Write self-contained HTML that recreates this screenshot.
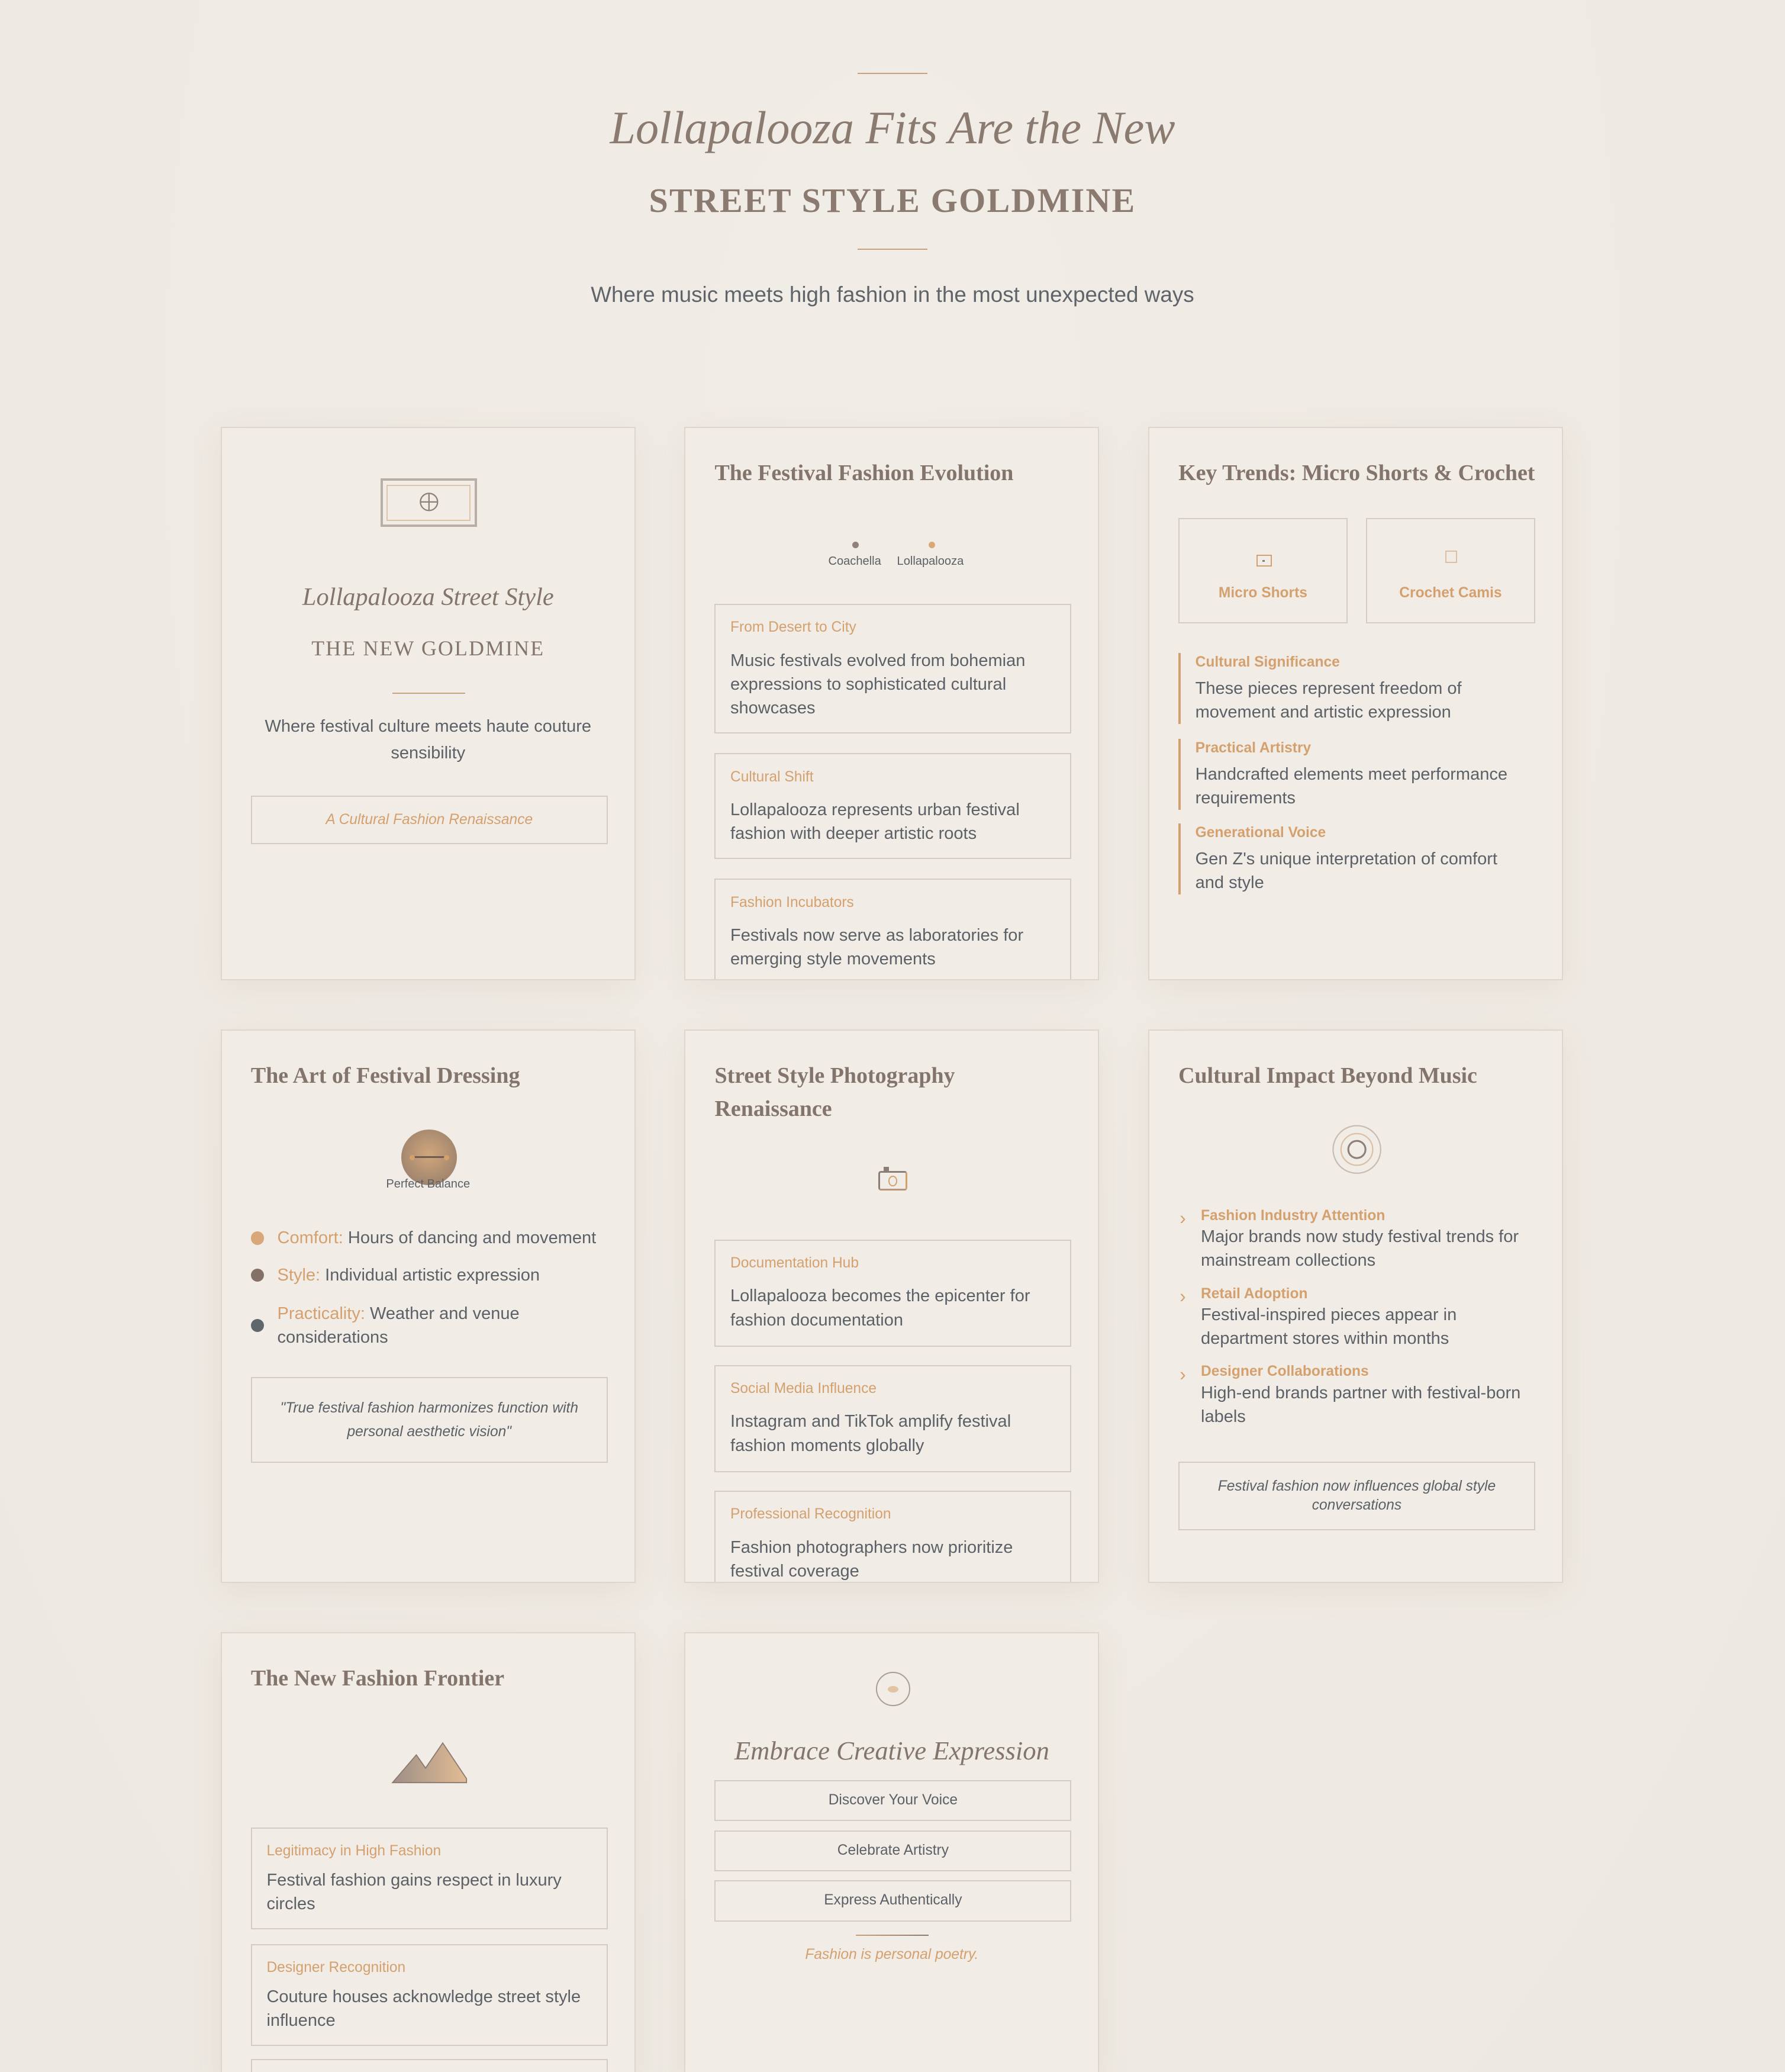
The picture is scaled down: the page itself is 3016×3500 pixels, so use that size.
<!DOCTYPE html>
<html><head><meta charset="utf-8">
<style>
*{margin:0;padding:0;box-sizing:border-box}
html,body{width:3016px;height:3500px;overflow:hidden;background:#efeae3}
#w{zoom:2.2324;width:1351px;height:1568px;position:relative;background:radial-gradient(ellipse at 50% 20%,#f1ece6,#ede8e1);font-family:"Liberation Sans",sans-serif;color:#5b6167}
.a{position:absolute}
.serif{font-family:"Liberation Serif",serif}
.c{position:absolute;width:314px;height:419px;background:#f1ece5;border:1px solid #ddd6cd;box-shadow:0 6px 24px rgba(120,100,80,.08);overflow:hidden}
.h{position:absolute;left:22px;top:22px;right:18px;font-family:"Liberation Serif",serif;font-weight:bold;font-size:17px;line-height:25px;color:#83756b}
.box{position:absolute;left:22px;width:270px;border:1px solid #d3ccc4}
.lb{font-size:11px;color:#d4a06e;line-height:14px}
.tx{font-size:13px;line-height:18px;color:#5b6167}
.ctr{text-align:center;left:0;right:0}
</style></head><body><div id="w">
<div class="a" style="left:649px;top:55px;width:53px;height:1px;background:#c9a27c"></div>
<div class="a ctr serif" style="top:74px;font-size:35px;line-height:46px;font-style:italic;color:#8a7a70">Lollapalooza Fits Are the New</div>
<div class="a ctr serif" style="top:134px;font-size:26px;line-height:36px;font-weight:bold;letter-spacing:1px;color:#8a7a70">STREET STYLE GOLDMINE</div>
<div class="a" style="left:649px;top:188px;width:53px;height:1px;background:#c9a27c"></div>
<div class="a ctr" style="top:212px;font-size:16.5px;line-height:22px;color:#5e646a">Where music meets high fashion in the most unexpected ways</div>

<!-- card 1 -->
<div class="c" style="left:167px;top:323px">
 <div class="a" style="left:120px;top:38px;width:73px;height:37px;border:2px solid #b9aea5"><div class="a" style="left:3px;top:3px;right:3px;bottom:3px;border:1px solid #dcc4a8"></div>
 <svg class="a" style="left:27px;top:8px" width="16" height="16" viewBox="0 0 16 16"><circle cx="8" cy="8" r="6.5" fill="none" stroke="#8c8079" stroke-width="1"/><path d="M8 1.5V14.5M1.5 8H14.5" stroke="#8c8079" stroke-width="1"/></svg></div>
 <div class="a ctr serif" style="top:115px;font-size:19px;line-height:26px;font-style:italic;color:#83756b">Lollapalooza Street Style</div>
 <div class="a ctr serif" style="top:156px;font-size:16px;line-height:22px;letter-spacing:1px;color:#83756b">THE NEW GOLDMINE</div>
 <div class="a" style="left:129px;top:200px;width:55px;height:1px;background:#c9a27c"></div>
 <div class="a ctr tx" style="top:216px;left:20px;right:20px;line-height:20px">Where festival culture meets haute couture sensibility</div>
 <div class="box" style="top:278px;height:37px;text-align:center;font-size:11px;line-height:35px;font-style:italic;color:#d4a06e">A Cultural Fashion Renaissance</div>
</div>

<!-- card 2 -->
<div class="c" style="left:518px;top:323px">
 <div class="h">The Festival Fashion Evolution</div>
 <div class="a" style="left:126px;top:86px;width:5px;height:5px;border-radius:50%;background:#8e827b"></div>
 <div class="a" style="left:184px;top:86px;width:5px;height:5px;border-radius:50%;background:#d8a878"></div>
 <div class="a" style="left:108px;top:95px;font-size:9px;line-height:12px;color:#5b6167">Coachella</div>
 <div class="a" style="left:160px;top:95px;font-size:9px;line-height:12px;color:#5b6167">Lollapalooza</div>
 <div class="box" style="top:133px;height:98px;padding:10px 11px"><div class="lb">From Desert to City</div><div class="tx" style="margin-top:9px">Music festivals evolved from bohemian expressions to sophisticated cultural showcases</div></div>
 <div class="box" style="top:246px;height:80px;padding:10px 11px"><div class="lb">Cultural Shift</div><div class="tx" style="margin-top:9px">Lollapalooza represents urban festival fashion with deeper artistic roots</div></div>
 <div class="box" style="top:341px;height:90px;padding:10px 11px"><div class="lb">Fashion Incubators</div><div class="tx" style="margin-top:9px">Festivals now serve as laboratories for emerging style movements</div></div>
</div>

<!-- card 3 -->
<div class="c" style="left:869px;top:323px">
 <div class="h">Key Trends: Micro Shorts &amp; Crochet</div>
 <div class="box" style="top:68px;width:128px;height:80px;text-align:center">
  <div class="a" style="left:58px;top:27px;width:12px;height:9px;border:1px solid #d4a06e"><div class="a" style="left:4px;top:3px;width:1.5px;height:1.5px;background:#8a7a70"></div></div>
  <div class="a ctr" style="top:50px;font-size:11px;font-weight:bold;color:#d4a06e">Micro Shorts</div></div>
 <div class="box" style="left:164px;top:68px;width:128px;height:80px;text-align:center">
  <div class="a" style="left:59px;top:24px;width:9px;height:9px;border:1px solid #dcc0a4"></div>
  <div class="a ctr" style="top:50px;font-size:11px;font-weight:bold;color:#d4a06e">Crochet Camis</div></div>
 <div class="a" style="left:22px;top:170px;width:260px;border-left:2px solid #d4a06e;padding-left:11px;height:54px"><div class="lb" style="font-weight:bold">Cultural Significance</div><div class="tx" style="margin-top:4px">These pieces represent freedom of movement and artistic expression</div></div>
 <div class="a" style="left:22px;top:235px;width:260px;border-left:2px solid #d4a06e;padding-left:11px;height:54px"><div class="lb" style="font-weight:bold">Practical Artistry</div><div class="tx" style="margin-top:4px">Handcrafted elements meet performance requirements</div></div>
 <div class="a" style="left:22px;top:299px;width:260px;border-left:2px solid #d4a06e;padding-left:11px;height:54px"><div class="lb" style="font-weight:bold">Generational Voice</div><div class="tx" style="margin-top:4px">Gen Z's unique interpretation of comfort and style</div></div>
</div>

<!-- card 4 -->
<div class="c" style="left:167px;top:779px">
 <div class="h">The Art of Festival Dressing</div>
 <div class="a" style="left:136px;top:75px;width:42px;height:42px;border-radius:50%;background:radial-gradient(circle at 50% 45%,#d1a77c,#8e7868)"><div class="a" style="left:8px;top:20px;width:26px;height:1.5px;background:#6e5a4e"></div><div class="a" style="left:6px;top:19px;width:4px;height:4px;border-radius:50%;background:#d4a06e"></div><div class="a" style="left:32px;top:19px;width:4px;height:4px;border-radius:50%;background:#d4a06e"></div></div>
 <div class="a ctr" style="top:110px;font-size:9px;line-height:12px;color:#5b6167">Perfect Balance</div>
 <div class="a" style="left:22px;top:152px;width:10px;height:10px;border-radius:50%;background:#d8a878"></div>
 <div class="a tx" style="left:42px;top:148px"><span style="color:#d4a06e">Comfort:</span> Hours of dancing and movement</div>
 <div class="a" style="left:22px;top:180px;width:10px;height:10px;border-radius:50%;background:#857068"></div>
 <div class="a tx" style="left:42px;top:176px"><span style="color:#d4a06e">Style:</span> Individual artistic expression</div>
 <div class="a" style="left:22px;top:218px;width:10px;height:10px;border-radius:50%;background:#5d676c"></div>
 <div class="a tx" style="left:42px;top:205px;width:230px"><span style="color:#d4a06e">Practicality:</span> Weather and venue considerations</div>
 <div class="box" style="top:262px;height:65px;padding:14px 12px;text-align:center;font-size:11px;line-height:18px;font-style:italic;color:#5b6167">"True festival fashion harmonizes function with personal aesthetic vision"</div>
</div>

<!-- card 5 -->
<div class="c" style="left:518px;top:779px">
 <div class="h">Street Style Photography Renaissance</div>
 <div class="a" style="left:146px;top:106px;width:22px;height:15px;border:1.5px solid #8b7e76;border-radius:2px;border-right-color:#d4a06e;border-bottom-color:#b8957a"><div class="a" style="left:6px;top:2.5px;width:7px;height:8px;border:1px solid #d4a06e;border-radius:50%"></div></div>
 <div class="a" style="left:150px;top:103px;width:4px;height:3px;background:#8b7e76"></div>
 <div class="box" style="top:158px;height:81px;padding:10px 11px"><div class="lb">Documentation Hub</div><div class="tx" style="margin-top:9px">Lollapalooza becomes the epicenter for fashion documentation</div></div>
 <div class="box" style="top:253px;height:81px;padding:10px 11px"><div class="lb">Social Media Influence</div><div class="tx" style="margin-top:9px">Instagram and TikTok amplify festival fashion moments globally</div></div>
 <div class="box" style="top:348px;height:90px;padding:10px 11px"><div class="lb">Professional Recognition</div><div class="tx" style="margin-top:9px">Fashion photographers now prioritize festival coverage</div></div>
</div>

<!-- card 6 -->
<div class="c" style="left:869px;top:779px">
 <div class="h">Cultural Impact Beyond Music</div>
 <svg class="a" style="left:137px;top:70px" width="40" height="40" viewBox="0 0 40 40"><circle cx="20" cy="20" r="18" fill="none" stroke="#c7bcb3" stroke-width="1"/><circle cx="20" cy="20" r="12" fill="none" stroke="#dcc0a4" stroke-width="1"/><circle cx="20" cy="20" r="6.5" fill="none" stroke="#8c8079" stroke-width="1.4"/></svg>
 <div class="a" style="left:22px;top:133px;width:275px">
  <div style="position:relative;padding-left:17px;margin-bottom:9px"><span class="a" style="left:1px;top:1px;font-size:14px;color:#d4a06e">›</span><div class="lb" style="font-weight:bold">Fashion Industry Attention</div><div class="tx">Major brands now study festival trends for mainstream collections</div></div>
  <div style="position:relative;padding-left:17px;margin-bottom:9px"><span class="a" style="left:1px;top:1px;font-size:14px;color:#d4a06e">›</span><div class="lb" style="font-weight:bold">Retail Adoption</div><div class="tx">Festival-inspired pieces appear in department stores within months</div></div>
  <div style="position:relative;padding-left:17px"><span class="a" style="left:1px;top:1px;font-size:14px;color:#d4a06e">›</span><div class="lb" style="font-weight:bold">Designer Collaborations</div><div class="tx">High-end brands partner with festival-born labels</div></div>
 </div>
 <div class="box" style="top:326px;height:52px;padding:11px 12px;text-align:center;font-size:11px;line-height:14px;font-style:italic;color:#5b6167">Festival fashion now influences global style conversations</div>
</div>

<!-- card 7 -->
<div class="c" style="left:167px;top:1235px;height:340px">
 <div class="h">The New Fashion Frontier</div>
 <svg class="a" style="left:128px;top:82px" width="58" height="32" viewBox="0 0 58 32"><defs><linearGradient id="g" x1="0" x2="1"><stop offset="0" stop-color="#9e8f86"/><stop offset="1" stop-color="#e2bc94"/></linearGradient></defs><path d="M1 31L19 10L26 20L39 1L57 28V31Z" fill="url(#g)" stroke="#8a7a70" stroke-width=".8"/></svg>
 <div class="box" style="top:147px;height:77px;padding:10px 11px"><div class="lb">Legitimacy in High Fashion</div><div class="tx" style="margin-top:6px">Festival fashion gains respect in luxury circles</div></div>
 <div class="box" style="top:235px;height:77px;padding:10px 11px"><div class="lb">Designer Recognition</div><div class="tx" style="margin-top:6px">Couture houses acknowledge street style influence</div></div>
 <div class="box" style="top:322px;height:60px"></div>
</div>

<!-- card 8 -->
<div class="c" style="left:518px;top:1235px;height:340px">
 <div class="a" style="left:144px;top:29px;width:26px;height:26px;border:1px solid #a89c94;border-radius:50%"><div class="a" style="left:8px;top:10px;width:8px;height:5px;border-radius:50%;background:#e2c4a4"></div></div>
 <div class="a ctr serif" style="top:75px;font-size:20px;line-height:28px;font-style:italic;color:#83756b">Embrace Creative Expression</div>
 <div class="box" style="top:111px;height:31px;text-align:center;font-size:11px;line-height:29px;color:#5b6167">Discover Your Voice</div>
 <div class="box" style="top:149px;height:31px;text-align:center;font-size:11px;line-height:29px;color:#5b6167">Celebrate Artistry</div>
 <div class="box" style="top:187px;height:31px;text-align:center;font-size:11px;line-height:29px;color:#5b6167">Express Authentically</div>
 <div class="a" style="left:129px;top:228px;width:55px;height:1px;background:linear-gradient(90deg,#c9a27c,#8a7a70)"></div>
 <div class="a ctr" style="top:236px;font-size:11px;line-height:14px;font-style:italic;color:#d4a06e">Fashion is personal poetry.</div>
</div>
</div></body></html>
